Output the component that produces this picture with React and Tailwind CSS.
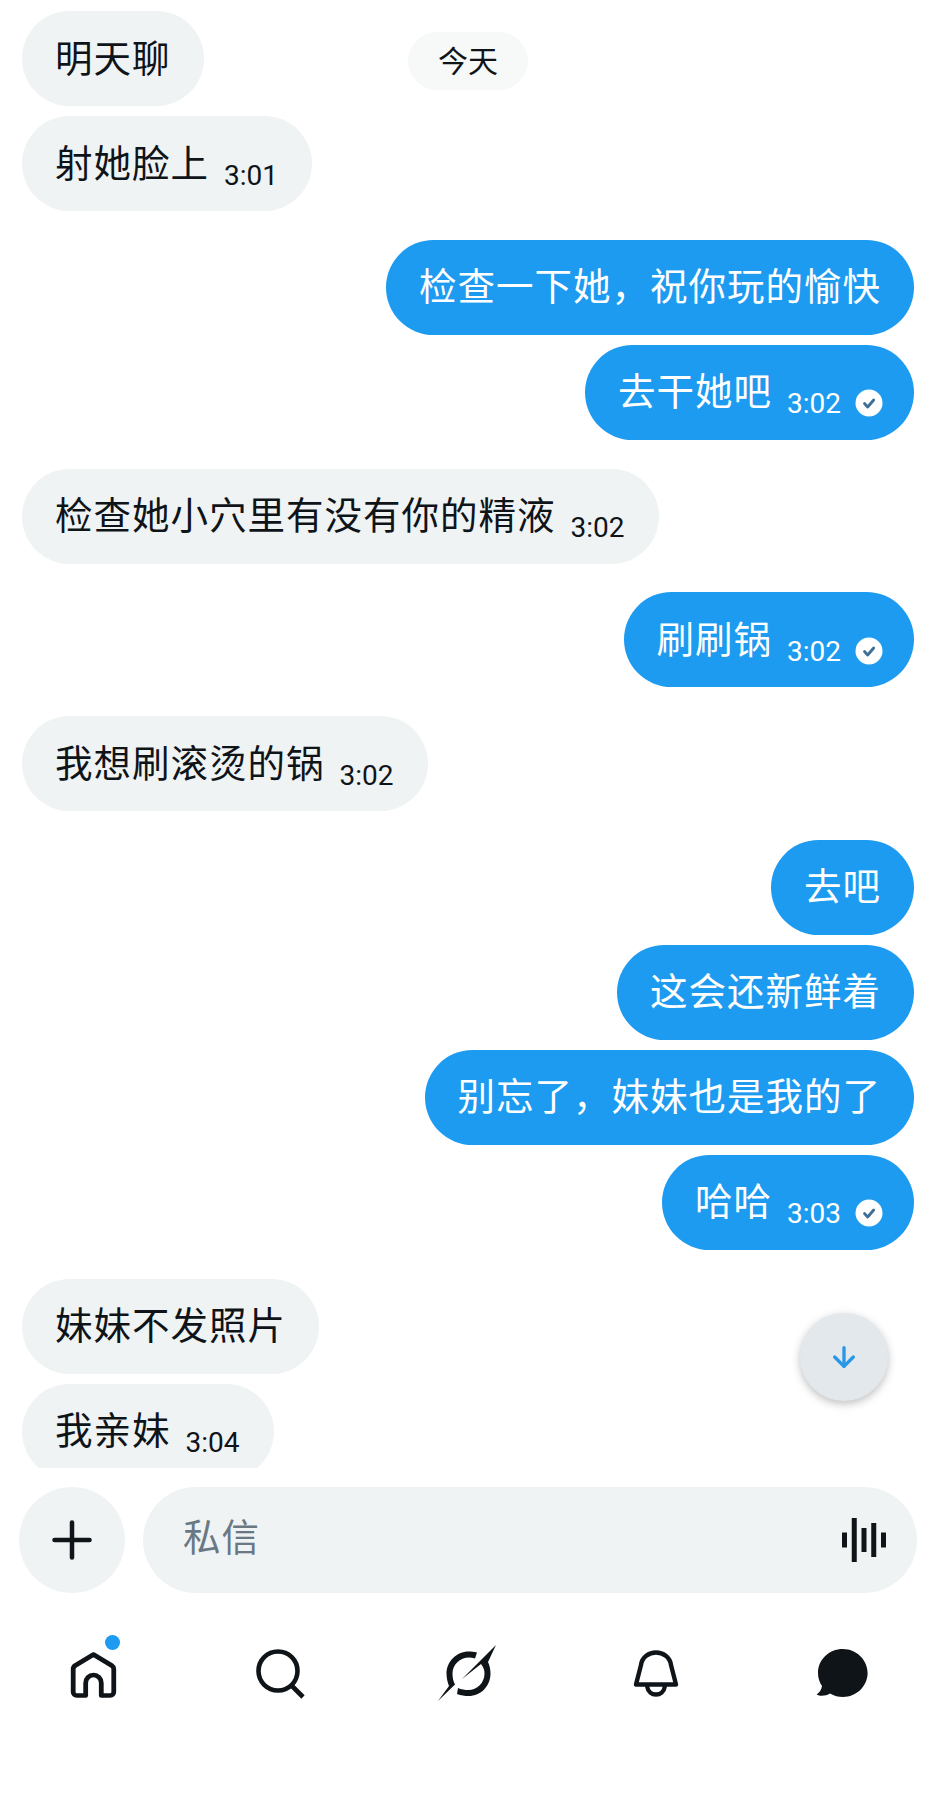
import { Plus, ArrowDown } from 'lucide-react';

const FONT = "font-['Roboto','Noto_Sans_CJK_SC',sans-serif]";

const groups = [
  { me: false, items: [{ text: '明天聊' }, { text: '射她脸上', time: '3:01' }] },
  { me: true, items: [{ text: '检查一下她，祝你玩的愉快' }, { text: '去干她吧', time: '3:02' }] },
  { me: false, items: [{ text: '检查她小穴里有没有你的精液', time: '3:02' }] },
  { me: true, items: [{ text: '刷刷锅', time: '3:02' }] },
  { me: false, items: [{ text: '我想刷滚烫的锅', time: '3:02' }] },
  {
    me: true,
    items: [
      { text: '去吧' },
      { text: '这会还新鲜着' },
      { text: '别忘了，妹妹也是我的了' },
      { text: '哈哈', time: '3:03' },
    ],
  },
  { me: false, items: [{ text: '妹妹不发照片' }, { text: '我亲妹', time: '3:04' }] },
];

function ReadCheck() {
  return (
    <svg width="28" height="28" viewBox="0 0 28 28" className="ml-[14px] mt-[22px] shrink-0">
      <circle cx="14" cy="14" r="13.500" fill="#ffffff" />
      <path d="M9.500 14.500l3.200 3.500 6-7" fill="none" stroke="#3f6f94" strokeWidth="2.800" strokeLinecap="round" strokeLinejoin="round" />
    </svg>
  );
}

function Bubble({ me, text, time }) {
  return (
    <div className={`h-[95px] rounded-[48px] pl-[33px] flex items-center whitespace-nowrap text-[37.5px] ${me ? 'bg-[#1d9bf0] text-white' : 'bg-[#eff3f4] text-[#0f1419]'} ${me && time ? 'pr-[31px]' : time ? 'pr-[34px]' : 'pr-[33px]'}`}>
      <span className="leading-[48px] tracking-[1px]">{text}</span>
      {time && <span className="ml-[15px] mt-[24px] text-[28px] leading-[30px]">{time}</span>}
      {me && time && <ReadCheck />}
    </div>
  );
}

function HomeIcon() {
  return (
    <svg width="52" height="50" viewBox="0 0 50 50" preserveAspectRatio="none" fill="none" stroke="#0f1419" strokeWidth="4.600" strokeLinejoin="round" className="translate-y-[5px]">
      <path d="M24.500 4.500L7 15.500c-1.300.9-2 2-2 3.500V42c0 2 1.300 3.500 3.500 3.500H17V33c0-4.500 3.300-8 7.500-8s7.500 3.500 7.500 8v12.500h8.500c2.200 0 3.500-1.500 3.500-3.500V19c0-1.500-.7-2.600-2-3.500z" />
    </svg>
  );
}

function SearchIcon() {
  return (
    <svg width="52" height="52" viewBox="0 0 52 52" fill="none" stroke="#0f1419" strokeWidth="4.600" className="overflow-visible">
      <circle cx="23" cy="27" r="19.500" />
      <path d="M36 41l12 12" />
    </svg>
  );
}

function CompassIcon() {
  return (
    <svg width="64" height="64" viewBox="0 0 64 64" fill="#0f1419">
      <path d="M41 14.500C38 13.800 35.500 13.500 33 13.500 20 13.500 10.500 24 10.500 35.500c0 4.500 1 8.500 2.500 12.500L2 63l17-16.500c-2-3.500-2.500-7.500-2.500-11 0-9 7.500-16 16.500-16 2 0 4 .3 6 1z" />
      <path d="M60 7L26 41l19-15c3 4 3.500 7 3.500 9.500C48.500 45 41 52 32.500 52c-3.500 0-7.500-.5-10.500-2l-1 6c4 1.500 8 2 11.500 2C45 58 54.500 48 54.500 35.500c0-4.500-1-8.500-2.500-11.500z" />
    </svg>
  );
}

function BellIcon() {
  return (
    <svg width="50" height="52" viewBox="0 0 50 52" fill="none" stroke="#0f1419" strokeWidth="4.400" strokeLinejoin="round" className="overflow-visible">
      <path d="M6 40.500h40L41 21C40 13 33 8.500 26 8.500S12 13 11 21z" />
      <path d="M17 42c1 6 5 8.500 9 8.500s8-2.500 9-8.500" />
    </svg>
  );
}

function ChatIcon() {
  return (
    <svg width="54" height="52" viewBox="0 0 54 52" fill="#0f1419" className="overflow-visible">
      <path d="M28 5C14 5 3 15.500 3 29c0 5 1.500 9.500 4 13-.5 4-3 7-5.400 8.500C5 52.500 11 52 15 49.500 19 52 23.500 53 28 53c13.500 0 24.600-11 24.600-24S41.500 5 28 5z" />
    </svg>
  );
}

function WaveIcon() {
  return (
    <svg width="44" height="44" viewBox="0 0 44 44" fill="#0f1419">
      <rect x="0" y="14.500" width="5" height="15" />
      <rect x="9.750" y="0" width="5" height="44" />
      <rect x="19.500" y="10" width="5" height="24" />
      <rect x="29.250" y="5" width="5" height="34" />
      <rect x="39" y="14.500" width="5" height="15" />
    </svg>
  );
}

export default function App() {
  return (
    <div className={`relative w-[936px] h-[1811px] bg-white overflow-hidden ${FONT}`}>
      <div className="h-[1468px] overflow-hidden pt-[11px] px-[22px] flex flex-col gap-[28.8px]">
        {groups.map((g, i) => (
          <div key={i} className={`flex flex-col gap-[10px] ${g.me ? 'items-end' : 'items-start'}`}>
            {g.items.map((m, j) => (
              <Bubble key={j} me={g.me} text={m.text} time={m.time} />
            ))}
          </div>
        ))}
      </div>

      {/* date pill sits over the list */}
      <div className="absolute left-[408px] top-[32px] w-[120px] h-[58px] rounded-[29px] bg-[#f7f9f9] flex items-center justify-center text-[30px] text-[#0f1419]">
        今天
      </div>

      <div className="absolute left-[800px] top-[1313px] w-[88px] h-[88px] rounded-full bg-[#e3e8ec] shadow-[0_3px_8px_rgba(0,0,0,0.25)] flex items-center justify-center text-[#2a97e6]">
        <ArrowDown size={32} strokeWidth={2.5} />
      </div>

      <div className="mt-[19px] pl-[19px] pr-[19px] flex items-center gap-[18px]">
        <div className="w-[106px] h-[106px] rounded-full bg-[#eff3f4] flex items-center justify-center shrink-0 text-[#0f1419]">
          <Plus size={60} strokeWidth={1.8} />
        </div>
        <div className="flex-1 h-[106px] rounded-[53px] bg-[#eff3f4] pl-[40px] pr-[31px] flex items-center justify-between">
          <span className="text-[37.5px] tracking-[1px] text-[#697882] -mt-[3px]">私信</span>
          <WaveIcon />
        </div>
      </div>

      <div className="relative mt-[45px] grid grid-cols-5 h-[56px]">
        <div className="relative flex items-center justify-center">
          <HomeIcon />
          <span className="absolute left-[105px] -top-[3px] w-[15px] h-[15px] rounded-full bg-[#1d9bf0]" />
        </div>
        <div className="flex items-center justify-center"><SearchIcon /></div>
        <div className="flex items-center justify-center"><CompassIcon /></div>
        <div className="flex items-center justify-center"><BellIcon /></div>
        <div className="flex items-center justify-center"><ChatIcon /></div>
      </div>
    </div>
  );
}
